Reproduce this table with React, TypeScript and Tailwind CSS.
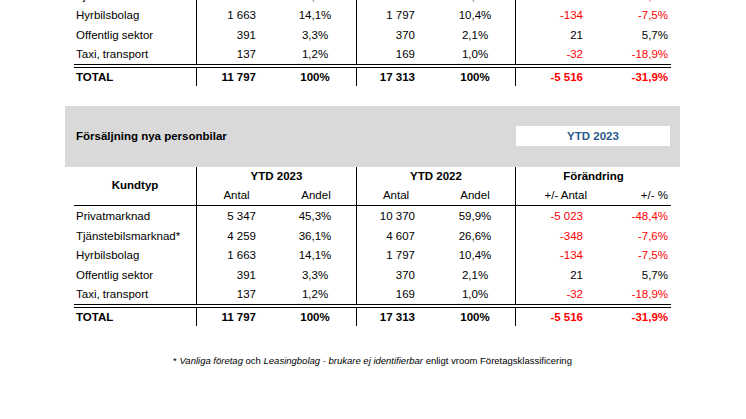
type Row = [string, string, string, string, string, string, string];

const rows: Row[] = [
  ["Privatmarknad", "5 347", "45,3%", "10 370", "59,9%", "-5 023", "-48,4%"],
  ["Tjänstebilsmarknad*", "4 259", "36,1%", "4 607", "26,6%", "-348", "-7,6%"],
  ["Hyrbilsbolag", "1 663", "14,1%", "1 797", "10,4%", "-134", "-7,5%"],
  ["Offentlig sektor", "391", "3,3%", "370", "2,1%", "21", "5,7%"],
  ["Taxi, transport", "137", "1,2%", "169", "1,0%", "-32", "-18,9%"],
];

const total: Row = ["TOTAL", "11 797", "100%", "17 313", "100%", "-5 516", "-31,9%"];

const cols = "grid grid-cols-[122px_80px_80px_79px_80px_78px_78px]";

const neg = (v: string) => (v.startsWith("-") ? "text-[#ff0000]" : "text-black");

const DataRow = ({ r, bold, h }: { r: Row; bold?: boolean; h: string }) => (
  <div className={`${cols} ${h} items-center ${bold ? "font-bold" : ""}`}>
    <div className="pl-[2px] pt-[2px]">{r[0]}</div>
    <div className="h-full flex items-center justify-end border-l border-black pr-[20px] pt-[2px]">{r[1]}</div>
    <div className="text-center pr-[2px] pt-[2px]">{r[2]}</div>
    <div className="h-full flex items-center justify-end border-l border-black pr-[20px] pt-[2px]">{r[3]}</div>
    <div className="text-center pt-[2px]">{r[4]}</div>
    <div className={`h-full flex items-center justify-end border-l border-black pr-[10px] pt-[2px] ${neg(r[5])}`}>{r[5]}</div>
    <div className={`text-right pr-[3px] pt-[2px] ${neg(r[6])}`}>{r[6]}</div>
  </div>
);

const Section = () => (
  <div className="flex flex-col">
    <div className="h-[61px] bg-[#d9d9d9] flex items-center justify-between pl-[11px] pr-[10px]">
      <span className="font-bold">Försäljning nya personbilar</span>
      <div className="w-[154px] h-[20px] bg-white flex items-center justify-center font-bold text-[#2b5a8a]">
        YTD 2023
      </div>
    </div>
    <div className="mx-[9px]">
      <div className={`${cols} grid-rows-[19px_19px] border-b border-black`}>
        <div className="row-span-2 flex items-center justify-center font-bold">Kundtyp</div>
        <div className="col-span-2 border-l border-black flex items-center justify-center font-bold">YTD 2023</div>
        <div className="col-span-2 border-l border-black flex items-center justify-center font-bold">YTD 2022</div>
        <div className="col-span-2 border-l border-black flex items-center justify-center font-bold">Förändring</div>
        <div className="border-l border-black flex items-center justify-center">Antal</div>
        <div className="flex items-center justify-center">Andel</div>
        <div className="border-l border-black flex items-center justify-center">Antal</div>
        <div className="flex items-center justify-center">Andel</div>
        <div className="border-l border-black flex items-center justify-end pr-[6px]">+/- Antal</div>
        <div className="flex items-center justify-end pr-[3px]">+/- %</div>
      </div>
      {rows.map((r) => (
        <DataRow key={r[0]} r={r} h="h-[19.6px]" />
      ))}
      <div className="h-[4px] border-t border-b border-black" />
      <DataRow r={total} bold h="h-[18px]" />
    </div>
  </div>
);

export default function App() {
  return (
    <div
      className="w-[746px] h-[419px] overflow-hidden bg-white text-black text-[11.5px] leading-none"
      style={{ fontFamily: '"Liberation Sans", Arial, sans-serif' }}
    >
      <div className="-mt-[134px] ml-[65px] w-[615px] flex flex-col gap-[20px]">
        <Section />
        <Section />
        <p className="mx-[9px] mt-[9px] text-center text-[9.5px] leading-[12px]">
          * <i>Vanliga företag</i> och <i>Leasingbolag - brukare ej identifierbar</i> enligt vroom Företagsklassificering
        </p>
      </div>
    </div>
  );
}
